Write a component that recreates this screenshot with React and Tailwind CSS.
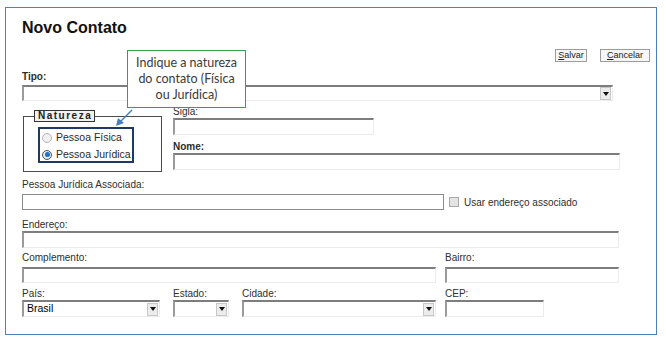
import React from 'react';

const font = { fontFamily: '"Liberation Sans", Arial, sans-serif' };

function Label({ children, bold, className = '' }) {
  return (
    <div className={`h-[12px] leading-[12px] text-[10px] text-[#2e2e2e] ${bold ? 'font-bold' : ''} ${className}`}>
      {children}
    </div>
  );
}

function Input({ className = '' }) {
  return (
    <div className={`bg-white border-t-2 border-l-2 border-r border-b border-t-[#7d7d7d] border-l-[#9a9a9a] border-r-[#ececec] border-b-[#ececec] ${className}`} />
  );
}

function DropArrow() {
  return (
    <div className="w-[11px] h-[13px] bg-[#ececec] border border-[#c8c8c8] flex items-center justify-center">
      <svg width="6" height="4" viewBox="0 0 6 4">
        <polygon points="0,0 6,0 3,4" fill="#111" />
      </svg>
    </div>
  );
}

function Select({ className = '', value }) {
  return (
    <div className={`bg-white border-t-2 border-l-2 border-r border-b border-t-[#7d7d7d] border-l-[#9a9a9a] border-r-[#ececec] border-b-[#ececec] flex items-center justify-between pl-[3px] pr-[1px] ${className}`}>
      <span className="text-[10.5px] text-black">{value}</span>
      <DropArrow />
    </div>
  );
}

function Radio({ checked, label }) {
  return (
    <div className="flex items-center h-[17px] whitespace-nowrap">
      <div className={`shrink-0 w-[10px] h-[10px] rounded-full border flex items-center justify-center ${checked ? 'border-[#555] bg-[#dfe8f2]' : 'border-[#b5b5b5] bg-[#f0f0f0]'}`}>
        {checked && <div className="w-[5px] h-[5px] rounded-full bg-[#1e6fc8]" />}
      </div>
      <span className="ml-[4px] text-[10.5px] text-[#2a2a2a]">{label}</span>
    </div>
  );
}

export default function App() {
  return (
    <div className="w-[666px] h-[343px] bg-white pt-[7px] pl-[5px]" style={font}>
      <div className="relative w-[652px] h-[328px] border border-[#4f81bd] pl-[16px] pr-[6px]">
        {/* Title */}
        <div className="mt-[11px] h-[18px] leading-[18px] text-[16px] font-bold text-[#111]">Novo Contato</div>

        {/* Buttons */}
        <div className="mt-[12px] flex justify-end gap-[13px]">
          <button className="w-[32px] h-[13px] border border-[#9c9c9c] bg-[#f6f6f6] text-[9px] leading-[11px] text-[#222]">
            <span className="underline">S</span>alvar
          </button>
          <button className="w-[50px] h-[13px] border border-[#9c9c9c] bg-[#f6f6f6] text-[9px] leading-[11px] text-[#222]">
            <span className="underline">C</span>ancelar
          </button>
        </div>

        {/* Tipo */}
        <Label bold className="mt-[9px]">Tipo:</Label>
        <Select className="mt-[2px] w-[591px] h-[16px]" value="" />

        {/* Natureza + Sigla/Nome */}
        <div className="mt-[5px] flex">
          <fieldset className="mt-[4px] ml-[1px] w-[139px] h-[62px] border border-[#4a4a4a] px-0">
            <legend className="ml-[10px] px-0">
              <div className="w-[61px] h-[12px] border border-[#333] bg-[#f2f2f2] text-[10px] leading-[10px] font-bold tracking-[1.5px] text-[#222] pl-[3px]">
                Natureza
              </div>
            </legend>
            <div className="ml-[14px] mt-[5px] w-[96px] h-[36px] border-2 border-[#1f3864] pl-[2px] pt-0">
              <Radio label="Pessoa Física" />
              <Radio checked label="Pessoa Jurídica" />
            </div>
          </fieldset>
          <div className="ml-[11px]">
            <Label>Sigla:</Label>
            <Input className="w-[201px] h-[17px]" />
            <Label bold className="mt-[6px]">Nome:</Label>
            <Input className="w-[447px] h-[17px]" />
          </div>
        </div>

        {/* Pessoa Juridica Associada */}
        <Label className="mt-[7px]">Pessoa Jurídica Associada:</Label>
        <div className="mt-[3px] flex items-center">
          <div className="w-[422px] h-[16px] border border-[#8a8a8a] bg-white" />
          <div className="ml-[5px] w-[10px] h-[10px] border border-[#aaa] bg-[#e4e4e4]" />
          <span className="ml-[5px] text-[10px] text-[#2e2e2e]">Usar endereço associado</span>
        </div>

        {/* Endereco */}
        <Label className="mt-[9px]">Endereço:</Label>
        <Input className="w-[597px] h-[17px]" />

        {/* Complemento / Bairro */}
        <div className="mt-[4px] flex">
          <div>
            <Label>Complemento:</Label>
            <Input className="mt-[3px] w-[414px] h-[16px]" />
          </div>
          <div className="ml-[9px]">
            <Label>Bairro:</Label>
            <Input className="mt-[3px] w-[174px] h-[16px]" />
          </div>
        </div>

        {/* Pais / Estado / Cidade / CEP */}
        <div className="mt-[5px] flex">
          <div>
            <Label>País:</Label>
            <Select className="w-[138px] h-[17px]" value="Brasil" />
          </div>
          <div className="ml-[13px]">
            <Label>Estado:</Label>
            <Select className="w-[56px] h-[17px]" value="" />
          </div>
          <div className="ml-[13px]">
            <Label>Cidade:</Label>
            <Select className="w-[194px] h-[17px]" value="" />
          </div>
          <div className="ml-[9px]">
            <Label>CEP:</Label>
            <Input className="w-[99px] h-[17px]" />
          </div>
        </div>

        {/* Annotation callout */}
        <div
          className="absolute left-[121px] top-[42px] w-[119px] h-[58px] border border-[#2ea44f] bg-white flex items-center justify-center text-center text-[12.5px] leading-[16px] text-[#3b3b3b]"
          style={{ fontFamily: 'Lato, "Open Sans", sans-serif' }}
        >
          Indique a natureza
          <br />
          do contato (Física
          <br />
          ou Jurídica)
        </div>

        {/* Annotation arrow */}
        <svg className="absolute left-[104px] top-[100px]" width="26" height="20" viewBox="0 0 26 20">
          <line x1="22" y1="2" x2="10" y2="14" stroke="#4a7ebb" strokeWidth="1.5" />
          <polygon points="6,18 8,10 14,15" fill="#4a7ebb" />
        </svg>
      </div>
    </div>
  );
}
